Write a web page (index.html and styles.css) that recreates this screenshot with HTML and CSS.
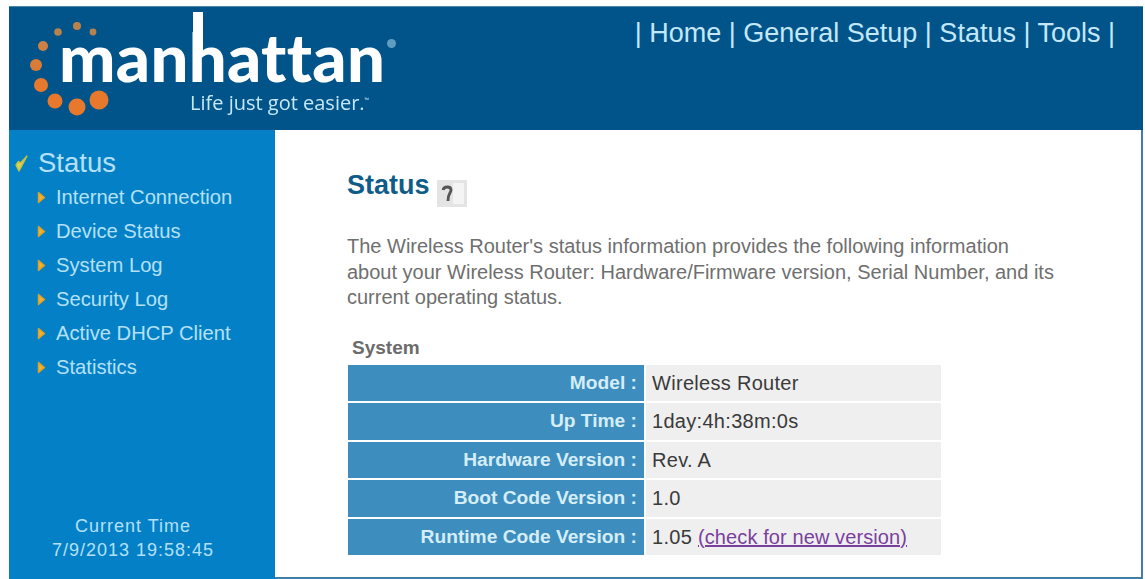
FILE: index.html
```html
<!DOCTYPE html>
<html lang="en">
<head>
<meta charset="utf-8">
<title>Status</title>
<link rel="stylesheet" href="styles.css">
</head>
<body>
<div class="frame">
  <header class="top">
    <div class="logo">
      <svg class="dots" width="110" height="118" viewBox="0 0 110 118" aria-hidden="true">
        <g fill="#e8792c">
          <circle cx="77" cy="25" r="4" fill="#b9824c"/>
          <circle cx="58" cy="31" r="3.8" fill="#b9824c"/>
          <circle cx="93" cy="31" r="3.4" fill="#b9824c"/>
          <circle cx="43" cy="45" r="5" fill="#cf8042"/>
          <circle cx="36" cy="64" r="6" fill="#d97c36"/>
          <circle cx="41" cy="84" r="7"/>
          <circle cx="55" cy="100" r="7.5"/>
          <circle cx="77" cy="106" r="8.5"/>
          <circle cx="99" cy="99" r="9.5"/>
        </g>
      </svg>
      <div class="wordmark">man<span class="tall">h</span>attan<i class="reg"></i></div>
      <div class="tagline">Life just got easier.<sup>™</sup></div>
    </div>
    <nav class="topnav">| Home | General Setup | Status | Tools |</nav>
  </header>
  <div class="body">
    <aside class="side">
      <div class="side-title">
        <svg class="check" width="13" height="17" viewBox="0 0 13 17" aria-hidden="true"><path d="M1 10 L4 16 L12 1 L5.500 8 L3.500 6.500 Z" fill="#d9d25a" stroke="#c4c040" stroke-width="1.400" stroke-linejoin="round"/></svg>
        <span>Status</span>
      </div>
      <ul class="menu">
        <li><svg class="arrow" width="9" height="13" viewBox="0 0 9 13" aria-hidden="true"><path d="M1.500 1.500 L7.500 6.500 L1.500 11.500 Z" fill="#eeb52c" stroke="#dc9f2c" stroke-width="1.500" stroke-linejoin="round"/></svg>Internet Connection</li>
        <li><svg class="arrow" width="9" height="13" viewBox="0 0 9 13" aria-hidden="true"><path d="M1.500 1.500 L7.500 6.500 L1.500 11.500 Z" fill="#eeb52c" stroke="#dc9f2c" stroke-width="1.500" stroke-linejoin="round"/></svg>Device Status</li>
        <li><svg class="arrow" width="9" height="13" viewBox="0 0 9 13" aria-hidden="true"><path d="M1.500 1.500 L7.500 6.500 L1.500 11.500 Z" fill="#eeb52c" stroke="#dc9f2c" stroke-width="1.500" stroke-linejoin="round"/></svg>System Log</li>
        <li><svg class="arrow" width="9" height="13" viewBox="0 0 9 13" aria-hidden="true"><path d="M1.500 1.500 L7.500 6.500 L1.500 11.500 Z" fill="#eeb52c" stroke="#dc9f2c" stroke-width="1.500" stroke-linejoin="round"/></svg>Security Log</li>
        <li><svg class="arrow" width="9" height="13" viewBox="0 0 9 13" aria-hidden="true"><path d="M1.500 1.500 L7.500 6.500 L1.500 11.500 Z" fill="#eeb52c" stroke="#dc9f2c" stroke-width="1.500" stroke-linejoin="round"/></svg>Active DHCP Client</li>
        <li><svg class="arrow" width="9" height="13" viewBox="0 0 9 13" aria-hidden="true"><path d="M1.500 1.500 L7.500 6.500 L1.500 11.500 Z" fill="#eeb52c" stroke="#dc9f2c" stroke-width="1.500" stroke-linejoin="round"/></svg>Statistics</li>
      </ul>
      <div class="clock">Current Time<br>7/9/2013 19:58:45</div>
    </aside>
    <main class="main">
      <h1 class="title">Status
        <svg class="help" width="30" height="27" viewBox="0 0 30 27" aria-hidden="true">
          <rect width="30" height="27" fill="#e4e4e4"/>
          <rect x="16" y="3" width="11" height="21" fill="#f4f4f4"/>
          <path d="M6 10 C7 6 14 6 14 10 C14 13 10.500 14 11 21" fill="none" stroke="#555" stroke-width="2.800"/>
        </svg>
      </h1>
      <p class="intro">The Wireless Router's status information provides the following information about your Wireless Router: Hardware/Firmware version, Serial Number, and its current operating status.</p>
      <div class="caption">System</div>
      <div class="table">
        <div class="k">Model :</div><div class="v">Wireless Router</div>
        <div class="k">Up Time :</div><div class="v">1day:4h:38m:0s</div>
        <div class="k">Hardware Version :</div><div class="v">Rev. A</div>
        <div class="k">Boot Code Version :</div><div class="v">1.0</div>
        <div class="k">Runtime Code Version :</div><div class="v">1.05 <a class="link" href="#">(check for new version)</a></div>
      </div>
    </main>
  </div>
</div>
</body>
</html>
```
FILE: styles.css
```css
html, body { margin: 0; padding: 0; height: 100%; overflow: hidden; background: #fdfefd; }
body { padding: 6px 2px 0 9px; box-sizing: border-box; font-family: "Liberation Sans", Arial, sans-serif; }
.frame { height: 573px; display: flex; flex-direction: column; filter: blur(0.6px); }

.top { height: 124px; flex: none; background: #00548a; border-top: 1px solid #4d87a8; box-sizing: border-box; display: flex; justify-content: space-between; color: #c4e8f8; }
.logo { position: relative; width: 420px; }
.dots { position: absolute; left: -9px; top: -6px; }
.wordmark { position: absolute; left: 50px; top: 17px; font-family: Lato, sans-serif; font-weight: 900; font-size: 67px; letter-spacing: 0.300px; line-height: 64px; color: #fff; white-space: nowrap; }
.tall { position: relative; }
.tall::before { content: ""; position: absolute; left: 4px; top: -4px; width: 10px; height: 40px; background: #fff; }
.reg { position: absolute; right: -11px; top: 15px; width: 9px; height: 9px; border-radius: 50%; background: #5f9cc0; }
.tagline { position: absolute; left: 181px; top: 81px; font-family: "Open Sans", sans-serif; font-size: 20px; line-height: 24px; color: #c4e8f8; white-space: nowrap; }
.tagline sup { font-size: 6px; }
.topnav { font-size: 27px; line-height: 30px; padding: 11px 28px 0 0; white-space: nowrap; }

.body { flex: 1; display: flex; min-height: 0; }
.side { width: 266px; flex: none; background: #0480c6; color: #b4e1f7; display: flex; flex-direction: column; }
.side-title { display: flex; align-items: center; font-size: 27.500px; line-height: 30px; padding: 18px 0 0 6px; gap: 10px; }
.check { flex: none; }
.menu { list-style: none; margin: 2px 0 0; padding: 0 0 0 28px; font-size: 20.200px; }
.menu li { height: 34px; line-height: 34px; display: flex; align-items: center; gap: 10px; white-space: nowrap; }
.arrow { flex: none; }
.clock { margin-top: auto; padding: 0 18px 17px 0; text-align: center; font-size: 18px; letter-spacing: 1px; line-height: 24px; }

.main { flex: 1; background: #fff; border-right: 2px solid #3f7fa3; border-bottom: 2px solid #3f7fa3; padding: 38px 0 0 72px; color: #666; min-width: 0; }
.title { margin: 0; display: flex; align-items: flex-end; gap: 7px; font-size: 27px; line-height: 34px; font-weight: 700; color: #0f5c88; }
.help { flex: none; margin-bottom: -5px; filter: blur(0.7px); }
.intro { margin: 32px 0 0; width: 716px; font-size: 20px; line-height: 25.500px; color: #6f6f6f; }
.caption { margin: 27px 0 0 5px; font-size: 19px; font-weight: 700; line-height: 20px; color: #6b6b6b; }
.table { margin: 7px 0 0 1px; width: 593px; display: grid; grid-template-columns: 296px 295px; column-gap: 2px; row-gap: 2px; grid-auto-rows: 36.600px; }
.k { background: #3d8dbf; color: #d5edf6; font-size: 19.200px; font-weight: 700; line-height: 36px; text-align: right; padding-right: 7px; white-space: nowrap; }
.v { background: #efefef; color: #3a3a3a; font-size: 20px; letter-spacing: 0.300px; line-height: 36px; padding-left: 6px; white-space: nowrap; }
.link { color: #7a3f9e; text-decoration: underline; letter-spacing: 0.100px; }
```
